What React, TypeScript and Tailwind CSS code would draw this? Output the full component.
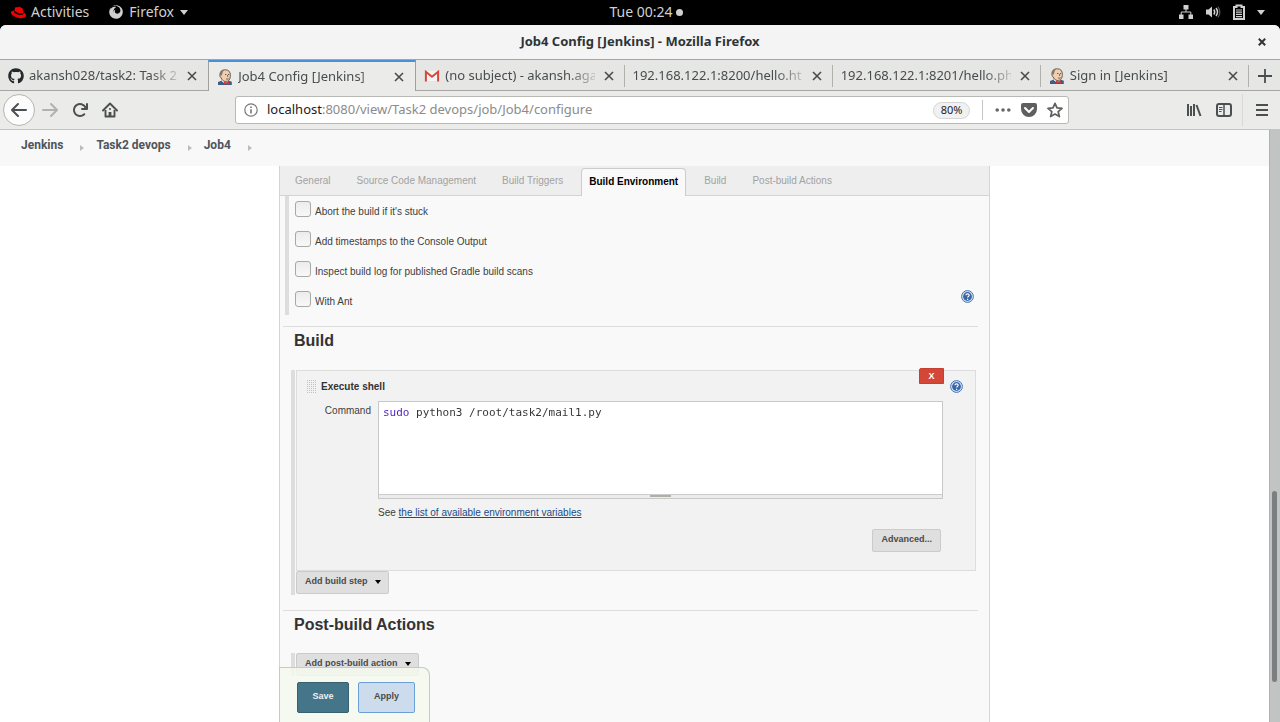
import React from "react";
import { FaFirefox, FaGithub, FaRedhat } from "react-icons/fa";

const uiFont = "font-['Noto_Sans','Open_Sans',sans-serif]";
const pageFont = "font-['Liberation_Sans',Arial,sans-serif]";

function Butler() {
  return (
    <svg viewBox="0 0 16 16" className="mr-[5px] size-4 shrink-0" aria-hidden="true">
      <path d="M1 16v-3l4-1.6 3 2 4-1.6 2.800 1V16z" fill="#3b5f86" />
      <path d="M5 10h6v3l-3 1.400L5 12.500z" fill="#fff" />
      <path d="M3 7C2.400 2.500 5 .8 8.300.8c3.500 0 5.200 2.200 5.100 5.700-.1 3.800-1.700 6-4.500 6C6 12.500 4.600 10.500 4.200 8.800 3.500 8.800 3 8 3 7z" fill="#efcfb0" stroke="#4b3f36" strokeWidth=".8" />
      <path d="M3 6.500C2.600 3 4.500 1 7.200.8 5.600 2.200 5.600 4.800 4.700 6.600z" fill="#8b7765" />
      <path d="M8 5.500h1.400M11 5.500h1.200M9 9.800c1 .5 2 .4 2.800-.1M10.600 6v1.800" stroke="#4b3f36" strokeWidth=".8" fill="none" />
      <path d="M7 12.300l2.500 1.200 2.700-1.300v3.300l-2.700-1-2.500 1.200z" fill="#d33a30" />
    </svg>
  );
}

function Gmail() {
  return (
    <svg viewBox="0 0 16 16" className="mr-[5px] size-4 shrink-0" aria-hidden="true">
      <path d="M2 3h12v10H2z" fill="#f3f3f3" />
      <path d="M1.900 13.500V3.800L8 8.700l6.100-4.900v9.700" fill="none" stroke="#d9463a" strokeWidth="2" />
    </svg>
  );
}

function Close({ label, className = "" }: { label: string; className?: string }) {
  return (
    <button aria-label={label} className={`flex size-4 shrink-0 items-center justify-center ${className}`}>
      <svg viewBox="0 0 10 10" className="size-[10px]" fill="none" stroke="currentColor" strokeWidth="1.600">
        <path d="M1 1l8 8M9 1L1 9" />
      </svg>
    </button>
  );
}

function TopBar() {
  return (
    <header className="grid h-[25px] shrink-0 grid-cols-[1fr_auto_1fr] items-center bg-black px-[11px] pb-px text-sm text-[#d0d0d0]">
      <div className="flex items-center">
        <button className="flex items-center gap-[5px]">
          <FaRedhat className="size-[15px] text-[#f00000]" />
          Activities
        </button>
        <button className="ml-5 flex items-center gap-[6px]">
          <FaFirefox className="size-[14px]" />
          Firefox
          <svg viewBox="0 0 8 5" className="h-[5px] w-2" fill="currentColor"><path d="M0 0h8L4 5z" /></svg>
        </button>
      </div>
      <button className="flex items-center gap-[3px] pl-3">
        Tue 00:24
        <span className="size-[7px] rounded-full bg-[#d0d0d0]" />
      </button>
      <div className="flex items-center justify-end gap-3 pr-1">
        <svg viewBox="0 0 14 14" className="size-[14px]" fill="currentColor" aria-label="Network">
          <path d="M4.500 0h5v4.500h-5zM0 9.500h4.500V14H0zM9.500 9.500H14V14H9.500z" />
          <path d="M7 4v3M2.200 10V7h9.600v3" fill="none" stroke="currentColor" />
        </svg>
        <svg viewBox="0 0 16 14" className="h-[14px] w-4" aria-label="Volume">
          <path d="M1 4.500h2.500L7 1.500v11L3.500 9.500H1z" fill="currentColor" />
          <path d="M8.800 4.500q1.800 2.500 0 5M11 3q3 4 0 8" fill="none" stroke="currentColor" strokeWidth="1.500" />
          <path d="M13 1.500q3.600 5.500 0 11" fill="none" stroke="#555" strokeWidth="1.300" />
        </svg>
        <svg viewBox="0 0 12 16" className="h-4 w-3" fill="none" stroke="currentColor" aria-label="Battery">
          <path d="M1 3h2.500V1.500h5V3H11v12H1z" strokeWidth="2" />
          <path d="M3 6h6M3 8.200h6M3 10.400h6M3 12.600h6" strokeWidth="1.200" />
        </svg>
        <svg viewBox="0 0 8 5" className="h-[5px] w-2" fill="currentColor" aria-label="System menu"><path d="M0 0h8L4 5z" /></svg>
      </div>
    </header>
  );
}

const browserTabs = [
  { title: "akansh028/task2: Task 2", icon: <FaGithub className="mr-[5px] size-4 shrink-0 text-[#24292e]" />, active: false },
  { title: "Job4 Config [Jenkins]", icon: <Butler />, active: true },
  { title: "(no subject) - akansh.aga", icon: <Gmail />, active: false },
  { title: "192.168.122.1:8200/hello.ht", icon: null, active: false },
  { title: "192.168.122.1:8201/hello.ph", icon: null, active: false },
  { title: "Sign in [Jenkins]", icon: <Butler />, active: false },
];

function TabStrip() {
  return (
    <div className="grid h-[31px] shrink-0 grid-cols-[repeat(6,minmax(0,1fr))_31px] text-[13px] text-[#474c4e]">
      {browserTabs.map((tab, i) => (
        <div
          key={tab.title}
          className={
            tab.active
              ? "flex items-center border-x border-t-2 border-x-[#a0a09c] border-t-[#4a90d9] bg-[#ebebe9] px-2"
              : "flex items-center border-b border-[#a5a5a1] bg-[#e6e6e4] pt-[2px] pl-2"
          }
        >
          {tab.icon}
          <button className="mr-[6px] min-w-0 flex-1 text-left whitespace-nowrap [mask-image:linear-gradient(to_right,black_calc(100%-28px),#0003)]">
            {tab.title}
          </button>
          <Close label={`Close ${tab.title}`} />
          {!tab.active && <span className={i > 1 ? "ml-[7px] h-[22px] w-px bg-[#b0b0ac]" : "ml-[7px] h-[22px] w-px"} />}
        </div>
      ))}
      <button aria-label="New tab" className="flex items-center justify-center border-b border-[#a5a5a1] bg-[#e6e6e4] pt-[2px]">
        <svg viewBox="0 0 14 14" className="size-[14px]" stroke="#474c4e" strokeWidth="1.800"><path d="M7 0v14M0 7h14" /></svg>
      </button>
    </div>
  );
}

const arrowPath =
  "M15 7H3.414l4.293-4.293a1 1 0 0 0-1.414-1.414l-6 6a1 1 0 0 0 0 1.414l6 6a1 1 0 0 0 1.414-1.414L3.414 9H15a1 1 0 0 0 0-2z";

function Toolbar() {
  return (
    <div className="flex h-[39px] shrink-0 items-center border-b border-[#c3c3c0] bg-[#ebebe9] pr-[10px] pl-[3px] text-[#4a4f51]">
      <button aria-label="Back" className="flex size-8 shrink-0 items-center justify-center rounded-full border border-[#b5b5b2] bg-[#fcfcfc]">
        <svg viewBox="0 0 16 16" className="size-4" fill="currentColor"><path d={arrowPath} /></svg>
      </button>
      <button aria-label="Forward" className="ml-[7px] text-[#b0b2b2]">
        <svg viewBox="0 0 16 16" className="size-4 -scale-x-100" fill="currentColor"><path d={arrowPath} /></svg>
      </button>
      <button aria-label="Reload" className="ml-[14px]">
        <svg viewBox="0 0 16 16" className="size-4" fill="currentColor">
          <path d="M15 1a1 1 0 0 0-1 1v2.418A6.995 6.995 0 1 0 8 15a6.954 6.954 0 0 0 4.950-2.050 1 1 0 0 0-1.414-1.414A5.019 5.019 0 1 1 12.549 6H10a1 1 0 0 0 0 2h5a1 1 0 0 0 1-1V2a1 1 0 0 0-1-1z" />
        </svg>
      </button>
      <button aria-label="Home" className="ml-[14px]">
        <svg viewBox="0 0 16 16" className="size-4" fill="none" stroke="currentColor">
          <path d="M1 8.500l7-7 7 7" strokeWidth="1.900" strokeLinecap="round" strokeLinejoin="round" />
          <path d="M3.500 8v6.500h9V8" strokeWidth="1.900" strokeLinejoin="round" />
          <path d="M8 10v4.500" strokeWidth="2.800" />
          <path d="M7.500 6.500h1v1h-1z" />
        </svg>
      </button>
      <div className="flex-[1]" />
      <div className="flex h-7 min-w-0 flex-[7] items-center rounded-[3px] border border-[#b8b8b5] bg-white pr-[5px] pl-2">
        <svg viewBox="0 0 14 14" className="mr-[9px] size-[14px] shrink-0" fill="none" stroke="#777" strokeWidth="1.200" aria-label="Site information">
          <circle cx="7" cy="7" r="6.200" />
          <path d="M7 6.200V10.500M7 3.400v1.500" strokeWidth="1.600" />
        </svg>
        <div className="min-w-0 flex-1 truncate text-[13px] text-[#8b8b8b]">
          <span className="text-[#1c1c1c]">localhost</span>:8080/view/Task2 devops/job/Job4/configure
        </div>
        <button className="h-[17px] w-[37px] rounded-full border border-[#d5d5d5] bg-[#f1f1f1] pb-px text-[11px] leading-[14px] text-[#222]">80%</button>
        <span className="mx-3 h-5 w-px bg-[#c5c5c5]" />
        <button aria-label="Page actions">
          <svg viewBox="0 0 16 16" className="size-4" fill="#666"><circle cx="2.200" cy="8" r="1.800" /><circle cx="8" cy="8" r="1.800" /><circle cx="13.800" cy="8" r="1.800" /></svg>
        </button>
        <button aria-label="Save to Pocket" className="ml-[10px]">
          <svg viewBox="0 0 16 16" className="size-4" fill="#5f5f5f">
            <path d="M8 15a8 8 0 0 1-8-8V3a2 2 0 0 1 2-2h12a2 2 0 0 1 2 2v4a8 8 0 0 1-8 8zm3.985-10.032a.99.99 0 0 0-.725.319L7.978 8.570 4.755 5.336A.984.984 0 0 0 4 4.968a1 1 0 0 0-.714 1.700l-.016.011 3.293 3.306.707.707a1 1 0 0 0 1.414 0l.707-.707L12.700 6.679a1 1 0 0 0-.715-1.711z" />
          </svg>
        </button>
        <button aria-label="Bookmark this page" className="ml-[10px]">
          <svg viewBox="0 0 16 16" className="size-4" fill="none" stroke="#5f5f5f" strokeWidth="1.700" strokeLinejoin="round">
            <path d="M8 1.300l2 4.600 5 .5-3.800 3.300 1.200 4.900L8 12l-4.400 2.600 1.200-4.900L1 6.400l5-.5z" />
          </svg>
        </button>
      </div>
      <div className="flex-[1]" />
      <button aria-label="Library">
        <svg viewBox="0 0 16 16" className="size-4" stroke="currentColor" strokeWidth="2">
          <path d="M2 2v12M5 4v10M8 2v12M10.500 3l4 11" />
        </svg>
      </button>
      <button aria-label="Sidebars" className="ml-[14px]">
        <svg viewBox="0 0 16 16" className="size-4" fill="none" stroke="currentColor">
          <rect x="1" y="2" width="14" height="12" rx="2" strokeWidth="2" />
          <path d="M8 3v10" strokeWidth="1.500" />
          <path d="M3 5.500h3.500M3 7.500h3.500M3 9.500h2.500" />
        </svg>
      </button>
      <span className="mr-[11px] ml-[10px] h-8 w-px bg-[#d8d8d5]" />
      <button aria-label="Open menu">
        <svg viewBox="0 0 16 16" className="size-4" stroke="currentColor" strokeWidth="1.800"><path d="M2 3h12M2 8h12M2 13h12" /></svg>
      </button>
    </div>
  );
}

function Help() {
  return (
    <button aria-label="Help" className="block size-[13px]">
      <svg viewBox="0 0 13 13" className="size-[13px]">
        <circle cx="6.500" cy="6.500" r="5.900" fill="#d5e2f3" stroke="#4a75b0" />
        <circle cx="6.500" cy="6.500" r="4.400" fill="#3766a8" />
        <path d="M4.900 5.300c0-2 3.300-2 3.300 0 0 1.200-1.600 1.100-1.600 2.300M6.600 8.700v1.200" stroke="#fff" strokeWidth="1.200" fill="none" />
      </svg>
    </button>
  );
}

function MenuButton({ children }: { children: React.ReactNode }) {
  return (
    <button className="flex h-[23px] items-center gap-[7px] rounded-[2px] border border-[#cbcbcb] bg-[#dfdfdf] pr-[7px] pb-[2px] pl-2 text-[9px] font-bold text-[#4a4a4a]">
      {children}
      <svg viewBox="0 0 6 4" className="mt-px h-1 w-[6px]" fill="#000"><path d="M0 0h6L3 4z" /></svg>
    </button>
  );
}

const crumbs = ["Jenkins", "Task2 devops", "Job4"];
const sections = ["General", "Source Code Management", "Build Triggers", "Build Environment", "Build", "Post-build Actions"];
const options = [
  "Abort the build if it's stuck",
  "Add timestamps to the Console Output",
  "Inspect build log for published Gradle build scans",
  "With Ant",
];

function ConfigPanel() {
  return (
    <main className={`relative mx-auto flex w-full max-w-[711px] flex-1 flex-col border-x border-[#d4d4d4] bg-[#f9f9f9] text-[10px] text-[#404040] ${pageFont}`}>
      <nav className="flex h-[30px] shrink-0 items-end gap-[10px] border-b border-[#d4d4d4] bg-[#eee] pl-[7px]">
        {sections.map((name) => (
          <a
            key={name}
            href="#"
            className={
              name === "Build Environment"
                ? "-mb-px h-[28px] rounded-t-[4px] border border-b-0 border-[#ccc] bg-[#f9f9f9] px-[7px] leading-[25px] font-bold whitespace-nowrap text-black"
                : "h-[27px] px-2 leading-[26px] whitespace-nowrap text-[#a2a2a2]"
            }
          >
            {name}
          </a>
        ))}
      </nav>

      <section className="ml-[5px] flex h-[119px] shrink-0 border-l-4 border-[#ddd] pr-[15px]">
        <div className="flex flex-1 flex-col pt-[5px] pl-[6px]">
          {options.map((option) => (
            <label key={option} className="flex h-[30px] shrink-0 items-start gap-1">
              <input type="checkbox" className="size-4 shrink-0 appearance-none rounded-[3px] border border-[#a8a8a4] bg-linear-to-b from-[#ececec] to-[#f8f8f8]" />
              <span className="leading-[22px]">{option}</span>
            </label>
          ))}
        </div>
        <div className="self-end pb-3"><Help /></div>
      </section>

      <section className="mt-[11px] mr-[11px] ml-[3px] border-t border-[#ddd]">
        <h2 className="pl-[11px] text-[16px] leading-7 font-bold text-[#333]">Build</h2>
        <div className="mt-[15px] ml-2 border-l-4 border-[#ddd] pr-[2px] pl-px">
          <div className="relative h-[201px] border border-[#ddd] bg-[#f2f2f2]">
            <button aria-label="Delete build step" className="absolute -top-[3px] right-[31px] h-4 w-[25px] rounded-tl-[2px] border border-[#c63f33] bg-[#d34638] text-[9px] leading-[13px] font-bold text-white">
              X
            </button>
            <div className="flex h-[30px] items-center pr-3 pl-[10px]">
              <svg viewBox="0 0 9 13" className="h-[13px] w-[9px]" fill="none" stroke="#c2c2c2" aria-hidden="true">
                <path d="M.5 0v13M2.500 0v13M4.500 0v13M6.500 0v13M8.500 0v13" strokeDasharray="1 1" />
              </svg>
              <h3 className="ml-[5px] flex-1 font-bold text-[#333]">Execute shell</h3>
              <Help />
            </div>
            <div className="grid grid-cols-[81px_1fr] pr-8">
              <label htmlFor="command" className="pt-[2px] pr-[7px] text-right">Command</label>
              <div>
                <div className="flex h-[98px] flex-col border border-[#c8c8c8] bg-white">
                  <textarea
                    id="command"
                    spellCheck={false}
                    defaultValue="sudo python3 /root/task2/mail1.py"
                    className="block min-h-0 w-full flex-1 resize-none bg-[linear-gradient(to_right,#5020c0_32px,#333_32px)] bg-clip-text px-1 pt-[3px] font-['DejaVu_Sans_Mono',monospace] text-[11px] text-transparent caret-black outline-none"
                  />
                  <div className="flex h-1 shrink-0 justify-center border-t border-[#ccc] bg-[#ececec]">
                    <span className="h-[2px] w-[21px] bg-[#b0b0a8]" />
                  </div>
                </div>
                <p className="mt-[6px] leading-4">
                  See <a href="#" className="text-[#204a87] underline">the list of available environment variables</a>
                </p>
              </div>
            </div>
            <div className="mt-2 flex justify-end pr-[34px]">
              <button className="h-[23px] rounded-[2px] border border-[#cbcbcb] bg-[#dfdfdf] px-2 pb-[2px] text-[9px] font-bold text-[#4a4a4a]">Advanced...</button>
            </div>
          </div>
          <div className="flex pb-px"><MenuButton>Add build step</MenuButton></div>
        </div>
      </section>

      <section className="mt-[15px] mr-[11px] ml-[3px] border-t border-[#ddd]">
        <h2 className="pl-[11px] text-[16px] leading-7 font-bold text-[#333]">Post-build Actions</h2>
        <div className="mt-[14px] ml-2 flex border-l-4 border-[#ddd] pl-px"><MenuButton>Add post-build action</MenuButton></div>
      </section>

      <div className="absolute bottom-0 -left-px flex h-[55px] gap-[9px] rounded-tr-[8px] border border-b-0 border-[#b4d3c4] bg-[#f5f9ef]/85 px-[14px] pt-[14px] pl-[17px] text-[9px] font-bold">
        <button className="h-[31px] w-[52px] rounded-[2px] border border-[#38606f] bg-[#447588] pb-[2px] text-[#f0f0f0]">Save</button>
        <button className="h-[31px] w-[57px] rounded-[2px] border border-[#6a9fd8] bg-[#ccdcec] pb-[2px] text-[#4a4a4a]">Apply</button>
      </div>
    </main>
  );
}

export default function App() {
  return (
    <div className={`flex h-screen flex-col overflow-hidden bg-black ${uiFont}`}>
      <TopBar />
      <div className="flex min-h-0 flex-1 flex-col overflow-hidden rounded-t-[6px] bg-white">
        <div className="grid h-[35px] shrink-0 grid-cols-[1fr_auto_1fr] items-center border-b border-[#a5a5a1] bg-[#f4f4f4] px-[10px] text-[#2e3436]">
          <span />
          <h1 className="text-[13px] font-bold">Job4 Config [Jenkins] - Mozilla Firefox</h1>
          <Close label="Close window" className="justify-self-end [&>svg]:size-2 [&>svg]:stroke-[2.500]" />
        </div>
        <TabStrip />
        <Toolbar />
        <div className="flex min-h-0 flex-1">
          <div className="flex min-w-0 flex-1 flex-col overflow-hidden bg-white">
            <nav className="flex h-9 shrink-0 items-start bg-[#f8f8f8] pt-[6px] pl-[21px] font-[Roboto,sans-serif] text-xs leading-[18px] font-bold text-[#4d545d]">
              {crumbs.map((name) => (
                <div key={name} className="flex items-center">
                  <a href="#">{name}</a>
                  <svg viewBox="0 0 4 6" className="mt-[5px] mr-[12px] ml-[17px] h-[6px] w-1" fill="#bbb"><path d="M0 0l4 3-4 3z" /></svg>
                </div>
              ))}
            </nav>
            <ConfigPanel />
          </div>
          <div className="flex w-[11px] flex-col border-l border-[#b0b2b1] bg-[#c2c4c3] px-[2px]">
            <div className="flex-[36]" />
            <div className="w-[5px] flex-[19] rounded-full bg-[#7b7f7f]" />
            <div className="flex-[4]" />
          </div>
        </div>
      </div>
    </div>
  );
}
